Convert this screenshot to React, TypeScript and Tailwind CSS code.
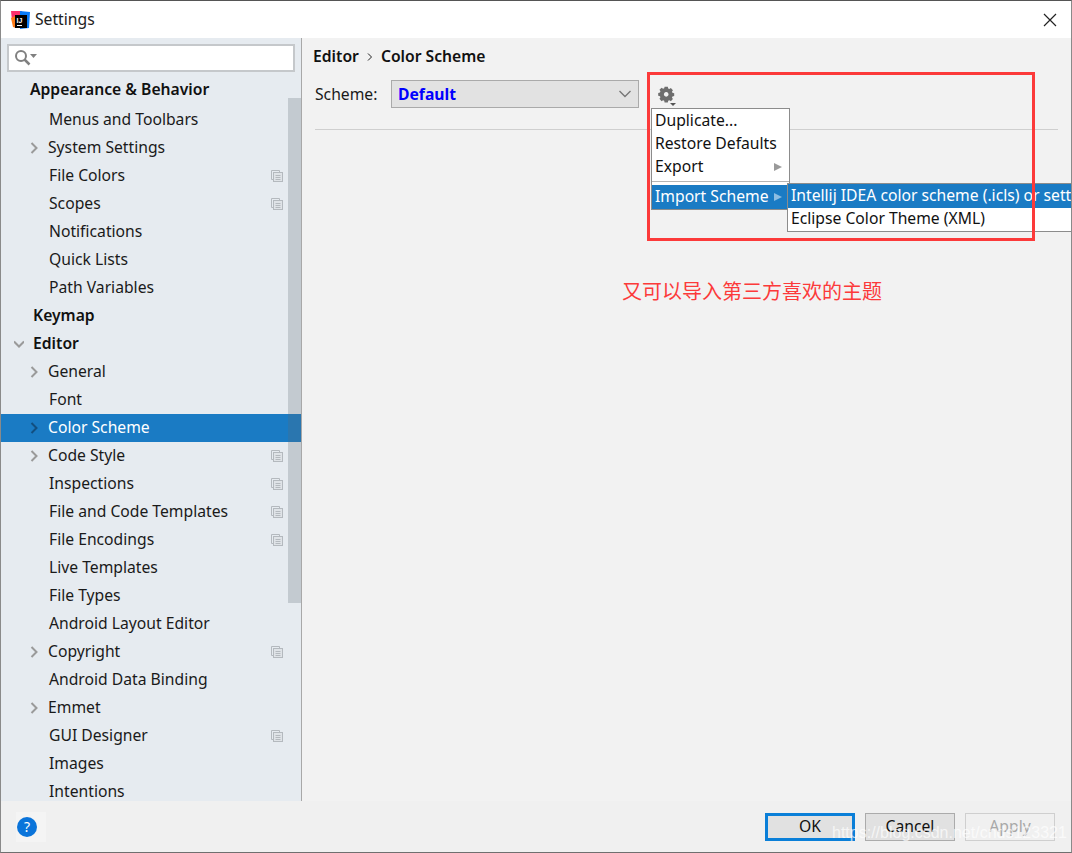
const items = [
  { label: "Appearance & Behavior", bold: true, indent: 29 },
  { label: "Menus and Toolbars", indent: 48 },
  { label: "System Settings", indent: 47, arrow: true },
  { label: "File Colors", indent: 48, copy: true },
  { label: "Scopes", indent: 48, copy: true },
  { label: "Notifications", indent: 48 },
  { label: "Quick Lists", indent: 48 },
  { label: "Path Variables", indent: 48 },
  { label: "Keymap", bold: true, indent: 32 },
  { label: "Editor", bold: true, indent: 32, open: true },
  { label: "General", indent: 47, arrow: true },
  { label: "Font", indent: 48 },
  { label: "Color Scheme", indent: 47, arrow: true, selected: true },
  { label: "Code Style", indent: 47, arrow: true, copy: true },
  { label: "Inspections", indent: 48, copy: true },
  { label: "File and Code Templates", indent: 48, copy: true },
  { label: "File Encodings", indent: 48, copy: true },
  { label: "Live Templates", indent: 48 },
  { label: "File Types", indent: 48 },
  { label: "Android Layout Editor", indent: 48 },
  { label: "Copyright", indent: 47, arrow: true, copy: true },
  { label: "Android Data Binding", indent: 48 },
  { label: "Emmet", indent: 47, arrow: true },
  { label: "GUI Designer", indent: 48, copy: true },
  { label: "Images", indent: 48 },
  { label: "Intentions", indent: 48 },
];

function IdeaLogo() {
  return (
    <svg width="21" height="20" viewBox="0 0 21 20">
      <path d="M1 1h11L9 11H2z" fill="#fc2f6b" />
      <path d="M10 1l10 1-1 16-9 1z" fill="#087cfa" />
      <path d="M1 8l4-2 1 12-3-1z" fill="#fe7a16" />
      <rect x="5" y="5" width="12" height="13" fill="#000" />
      <rect x="7" y="15" width="5" height="1" fill="#fff" />
      <text x="6.5" y="12.5" fontSize="7" fontWeight="700" fill="#fff" fontFamily="'Liberation Sans', sans-serif">IJ</text>
    </svg>
  );
}

function Chevron({ down, color }: { down?: boolean; color: string }) {
  return (
    <svg width="10" height="12" viewBox="0 0 10 12" fill="none" stroke={color} strokeWidth="2">
      {down ? <path d="M0 3.5l5 5 5-5" /> : <path d="M2.5 1l5 5-5 5" />}
    </svg>
  );
}

function CopyIcon() {
  return (
    <svg width="12" height="12" viewBox="0 0 12 12" fill="none" stroke="#b4b9be" className="shrink-0">
      <path d="M2.5 9.5h-2v-9h8v2" />
      <rect x="2.5" y="2.5" width="9" height="9" fill="#dfe3e7" />
      <path d="M4.5 5.5h5M4.5 7.5h5M4.5 9.5h5" />
    </svg>
  );
}

function Gear() {
  return (
    <svg width="22" height="22" viewBox="0 0 22 22">
      <path
        fill="#6e6e6e"
        fillRule="evenodd"
        d="M7 1h4l.5 2.2 1.4.6L14.8 2.6l2.6 2.6-1.2 1.9.6 1.4 2.2.5v3.6l-2.2.5-.6 1.4 1.2 1.9-2.6 2.6-1.9-1.2-1.4.6-.5 2.2H7l-.5-2.2-1.4-.6-1.9 1.2L.6 16l1.2-1.9-.6-1.4L-1 12.2V8.6l2.2-.5.6-1.4L.6 4.8l2.6-2.6 1.9 1.2 1.4-.6z M9 7.5a2.9 2.9 0 1 0 .01 0z"
        transform="translate(2 0) scale(0.8)"
      />
      <path d="M13 17h6l-3 3z" fill="#555" />
    </svg>
  );
}

function SmallTriangle({ color }: { color: string }) {
  return (
    <svg width="8" height="10" viewBox="0 0 8 10">
      <path d="M0 1l8 4-8 4z" fill={color} />
    </svg>
  );
}

function SearchIcon() {
  return (
    <svg width="24" height="18" viewBox="0 0 24 18" fill="none">
      <circle cx="7" cy="7" r="5" stroke="#808080" strokeWidth="2" />
      <path d="M10.5 10.5l5 5" stroke="#808080" strokeWidth="2.5" />
      <path d="M16 5h7l-3.5 4z" fill="#808080" />
    </svg>
  );
}

function Button({ label, primary, disabled }: { label: string; primary?: boolean; disabled?: boolean }) {
  return (
    <div
      className={`flex items-center justify-center ${
        primary
          ? "h-[28px] w-[90px] border-[3px] border-[#0a7fd8] bg-[#e1e1e1] text-[#111]"
          : disabled
            ? "h-[28px] w-[90px] border border-[#cfcfcf] text-[#a8a8a8]"
            : "h-[28px] w-[90px] border border-[#ababab] bg-[#e1e1e1] text-[#111]"
      }`}
    >
      {label}
    </div>
  );
}

export default function App() {
  return (
    <div className="relative flex h-[853px] w-[1072px] flex-col overflow-hidden border-x border-b border-t border-x-[#8a8a8a] border-b-[#6f6f6f] border-t-[#555] bg-[#f2f2f2] font-['Noto_Sans','Noto_Sans_CJK_SC',sans-serif] text-[15.7px] leading-none text-[#1a1a1a]">
      <header className="flex h-[37px] shrink-0 items-center bg-white pl-[9px] pr-[14px]">
        <IdeaLogo />
        <span className="ml-[4px] text-[#222]">Settings</span>
        <svg width="14" height="14" viewBox="0 0 14 14" className="ml-auto" stroke="#222" strokeWidth="1.2">
          <path d="M1 1l12 12M13 1L1 13" />
        </svg>
      </header>

      <div className="flex min-h-0 flex-1">
        <aside className="relative flex w-[301px] shrink-0 flex-col overflow-hidden border-r border-[#a8a8a8] bg-[#e6ebf0]">
          <div className="px-[6px] pt-[6px]">
            <div className="flex h-[28px] items-center border-2 border-[#c5c8cb] bg-white pl-[5px]">
              <SearchIcon />
            </div>
          </div>
          <div className="pt-[4px]">
            {items.map((item) => (
              <div
                key={item.label}
                className={`relative flex h-[28px] items-center ${item.selected ? "bg-[#1a7bc4] text-white" : ""} ${item.bold ? "font-semibold text-[#111]" : ""} ${item.label === "Appearance & Behavior" ? "mb-[2px]" : ""}`}
                style={{ paddingLeft: item.indent }}
              >
                {item.arrow && (
                  <span className="absolute left-[28px] top-[8px]">
                    <Chevron color={item.selected ? "#124f80" : "#9a9a9a"} />
                  </span>
                )}
                {item.open && (
                  <span className="absolute left-[13px] top-[8px]">
                    <Chevron down color="#9a9a9a" />
                  </span>
                )}
                {item.label}
                {item.copy && (
                  <span className="absolute left-[270px] top-[8px]">
                    <CopyIcon />
                  </span>
                )}
              </div>
            ))}
          </div>
          <div className="absolute right-0 top-[60px] h-[505px] w-[13px] bg-[#5a6670]/25" />
        </aside>

        <main className="min-w-0 flex-1 pl-[11px] pr-[13px]">
          <div className="flex h-[36px] items-center pt-[2px] font-semibold text-[#111]">
            <span>Editor</span>
            <svg width="6" height="8" viewBox="0 0 6 8" fill="none" stroke="#222" className="mx-[8px]">
              <path d="M1 .5L4.5 4 1 7.5" />
            </svg>
            <span>Color Scheme</span>
          </div>
          <div className="flex items-center pt-[6px]">
            <span className="ml-[2px] w-[76px] pt-[2px]">Scheme:</span>
            <div className="flex h-[28px] w-[248px] items-center justify-between border border-[#aaaaaa] bg-[#e2e2e2] pl-[6px] pr-[6px] font-bold text-[#0000ff]">
              <span className="pt-[2px]">Default</span>
              <svg width="14" height="8" viewBox="0 0 14 8" fill="none" stroke="#777" strokeWidth="1.4">
                <path d="M1.5 1l5.5 5.5L12.5 1" />
              </svg>
            </div>
            <span className="ml-[18px] mt-[6px]">
              <Gear />
            </span>
          </div>
          <div className="ml-[2px] mt-[21px] h-px bg-[#cfcfcf]" />
        </main>
      </div>

      <footer className="flex h-[51px] shrink-0 items-center bg-[#f0f0f0] pl-[15px] pr-[16px]">
        <div className="flex h-[30px] w-[30px] items-center bg-[#f4f4f4] pl-px">
          <div className="flex h-[20px] w-[20px] items-center justify-center rounded-full bg-[#0a74da] text-[14px] text-white">?</div>
        </div>
        <div className="ml-auto flex gap-[10px]">
          <Button label="OK" primary />
          <Button label="Cancel" />
          <Button label="Apply" disabled />
        </div>
      </footer>

      {/* popup menu */}
      <div className="absolute left-[650px] top-[107px] w-[139px] border border-[#8c8c8c] bg-white text-[#111]">
        <div className="flex h-[23px] items-center pl-[3px]">Duplicate...</div>
        <div className="flex h-[23px] items-center pl-[3px]">Restore Defaults</div>
        <div className="flex h-[23px] items-center justify-between pl-[3px] pr-[7px]">
          Export
          <SmallTriangle color="#9a9a9a" />
        </div>
        <div className="mt-[3px] h-px bg-[#b5b5b5]" />
        <div className="mt-[3px] flex h-[24px] items-center justify-between bg-[#1a7bc4] pl-[3px] pr-[7px] text-white">
          Import Scheme
          <SmallTriangle color="#8dbde2" />
        </div>
      </div>
      <div className="absolute left-[786px] top-[182px] w-[320px] border border-[#8c8c8c] bg-white text-[#111]">
        <div className="flex h-[24px] items-center whitespace-nowrap bg-[#1a7bc4] pl-[3px] text-white">Intellij IDEA color scheme (.icls) or settings</div>
        <div className="flex h-[23px] items-center pb-[2px] pl-[3px]">Eclipse Color Theme (XML)</div>
      </div>

      {/* annotation */}
      <div className="absolute left-[646px] top-[71px] h-[169px] w-[388px] border-[3px] border-[#fc3a3a]" />
      <div className="absolute left-[621px] top-[279px] text-[20px] leading-[24px] text-[#fc3a3a]">又可以导入第三方喜欢的主题</div>
      <div className="absolute left-[831px] top-[824px] whitespace-nowrap font-['Liberation_Sans',sans-serif] text-[16px] leading-none text-white/70">https://blog.csdn.net/cnds123321</div>
    </div>
  );
}
